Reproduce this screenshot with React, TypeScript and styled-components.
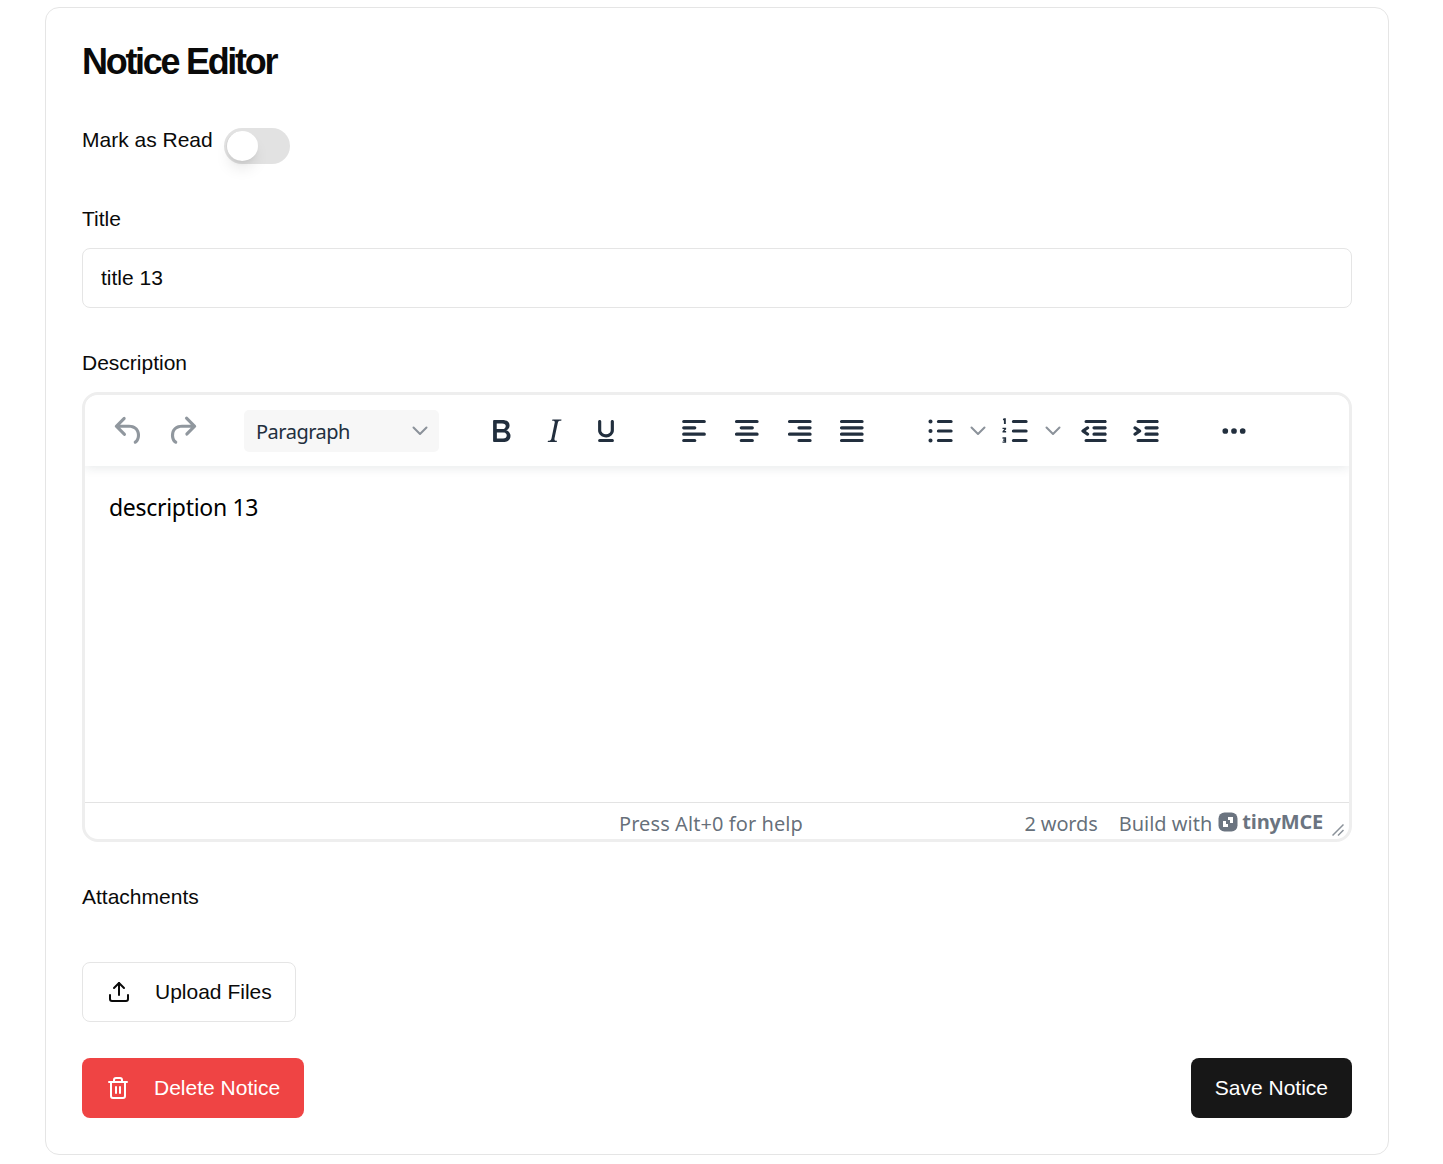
import React from 'react';
import styled, { createGlobalStyle } from 'styled-components';
import { Trash2, Upload } from 'lucide-react';

const bar = (x: number, y: number, w: number) => `M${x + 1} ${y}h${w - 2}a1 1 0 0 1 0 2H${x + 1}a1 1 0 0 1 0-2Z`;
const dot = (cx: number, cy: number, r = 1.5) => `M${cx - r} ${cy}a${r} ${r} 0 1 0 ${r * 2} 0a${r} ${r} 0 1 0 ${-r * 2} 0Z`;

const icons: Record<string, string> = {
	undo: 'M6.4 8H12c3.7 0 6.2 2 6.8 5.1.6 2.7-.4 5.6-2.3 6.8a1 1 0 0 1-1-1.8c1.1-.6 1.8-2.7 1.4-4.6-.5-2.1-2.1-3.5-4.9-3.5H6.4l3.3 3.3a1 1 0 1 1-1.4 1.4l-5-5a1 1 0 0 1 0-1.4l5-5a1 1 0 0 1 1.4 1.4L6.4 8Z',
	redo: 'M17.6 10H12c-2.8 0-4.4 1.4-4.9 3.5-.4 2 .3 4 1.4 4.6a1 1 0 1 1-1 1.8c-2-1.2-2.9-4.1-2.3-6.8.6-3 3-5.1 6.8-5.1h5.6l-3.3-3.3a1 1 0 1 1 1.4-1.4l5 5a1 1 0 0 1 0 1.4l-5 5a1 1 0 0 1-1.4-1.4l3.3-3.3Z',
	bold: 'M7.8 19c-.3 0-.5 0-.6-.2l-.2-.5V5.7c0-.2 0-.4.2-.5l.6-.2h5c1.5 0 2.7.3 3.5 1 .7.6 1.1 1.4 1.1 2.5a3 3 0 0 1-.6 1.9c-.4.6-1 1-1.6 1.2.4.1.9.3 1.3.6s.8.7 1 1.2c.4.4.5 1 .5 1.6 0 1.3-.4 2.3-1.3 3-.8.7-2.1 1-3.8 1H7.8Zm5-8.3c.6 0 1.2-.1 1.6-.5.4-.3.6-.7.6-1.3 0-1.1-.8-1.7-2.3-1.7H9.3v3.5h3.4Zm.5 6c.7 0 1.3-.1 1.7-.4.4-.4.6-.9.6-1.5s-.2-1-.7-1.4c-.4-.3-1-.4-2-.4H9.4v3.8h4Z',
	italic: 'm16.7 4.7-.1.9h-.3c-.6 0-1 0-1.4.3-.3.3-.4.6-.5 1.1l-2.1 9.8v.6c0 .5.4.8 1.4.8h.2l-.2.8H8l.2-.8h.2c1.1 0 1.8-.5 2-1.5l2-9.8.1-.5c0-.6-.4-.8-1.4-.8h-.3l.2-.9h5.8Z',
	underline: 'M16 5c.6 0 1 .4 1 1v5.5a4 4 0 0 1-.4 1.8l-1 1.4a5.3 5.3 0 0 1-5.5 1 5 5 0 0 1-1.6-1c-.5-.4-.8-.9-1.1-1.4a4 4 0 0 1-.4-1.8V6c0-.6.4-1 1-1s1 .4 1 1v5.5c0 .3 0 .6.2 1l.6.7a3.3 3.3 0 0 0 2.2.8 3.4 3.4 0 0 0 2.2-.8c.3-.2.4-.5.6-.8l.2-.9V6c0-.6.4-1 1-1ZM8 17h8c.6 0 1 .4 1 1s-.4 1-1 1H8a1 1 0 0 1 0-2Z',
	alignLeft: bar(4.5, 5, 15) + bar(4.5, 9, 9) + bar(4.5, 13, 15) + bar(4.5, 17, 9),
	alignCenter: bar(5, 5, 15) + bar(8, 9, 9) + bar(5, 13, 15) + bar(8, 17, 9),
	alignRight: bar(5, 5, 15) + bar(11, 9, 9) + bar(5, 13, 15) + bar(11, 17, 9),
	alignJustify: bar(5, 5, 15) + bar(5, 9, 15) + bar(5, 13, 15) + bar(5, 17, 15),
	bullets: bar(10, 5, 10) + bar(10, 11, 10) + bar(10, 17, 10) + dot(6, 6, 1.3) + dot(6, 12, 1.3) + dot(6, 18, 1.3),
	numbers: bar(10, 5, 10) + bar(10, 11, 10) + bar(10, 17, 10)
		+ 'M5 4h1.2v3.6H5V5.1l-.6.2V4.4L5 4Zm-.9 6h2.3v.9L5.3 12h1.1v.9H4.1v-.8l1.2-1.3H4.1V10Zm0 6h2.3v3.4H4.1v-.8h1.2v-.5H4.4v-.7h.9v-.5H4.1V16Z',
	outdent: 'M7 5h12c.6 0 1 .4 1 1s-.4 1-1 1H7a1 1 0 1 1 0-2Zm5 4h7c.6 0 1 .4 1 1s-.4 1-1 1h-7a1 1 0 0 1 0-2Zm0 4h7c.6 0 1 .4 1 1s-.4 1-1 1h-7a1 1 0 0 1 0-2Zm-5 4h12a1 1 0 0 1 0 2H7a1 1 0 0 1 0-2Zm1.6-3.8a1 1 0 0 1-1.2 1.6l-3-2a1 1 0 0 1 0-1.6l3-2a1 1 0 0 1 1.2 1.6L6.8 12l1.8 1.2Z',
	indent: 'M7 5h12c.6 0 1 .4 1 1s-.4 1-1 1H7a1 1 0 1 1 0-2Zm5 4h7c.6 0 1 .4 1 1s-.4 1-1 1h-7a1 1 0 0 1 0-2Zm0 4h7c.6 0 1 .4 1 1s-.4 1-1 1h-7a1 1 0 0 1 0-2Zm-5 4h12a1 1 0 0 1 0 2H7a1 1 0 0 1 0-2Zm-2.6-3.8L6.2 12l-1.8-1.2a1 1 0 0 1 1.2-1.6l3 2a1 1 0 0 1 0 1.6l-3 2a1 1 0 1 1-1.2-1.6Z',
	more: dot(6.5, 12, 1.8) + dot(12, 12, 1.8) + dot(17.5, 12, 1.8),
};

const App: React.FC = () => (
	<Page>
		<GlobalStyle />
		<Card>
			<Heading>{'Notice Editor'}</Heading>
			<ReadRow>
				<Label>{'Mark as Read'}</Label>
				<Toggle><Knob /></Toggle>
			</ReadRow>
			<Field>
				<Label>{'Title'}</Label>
				<TitleInput readOnly value={'title 13'} />
			</Field>
			<EditorField>
				<Label>{'Description'}</Label>
				<Editor>
					<Toolbar>
						<ToolGroup>
							<ToolIcon name={'undo'} muted />
							<ToolIcon name={'redo'} muted />
						</ToolGroup>
						<BlockSelect>
							<SelectValue>{'Paragraph'}</SelectValue>
							<Chevron />
						</BlockSelect>
						<ToolGroup>
							<ToolIcon name={'bold'} />
							<ToolIcon name={'italic'} />
							<ToolIcon name={'underline'} />
						</ToolGroup>
						<AlignGroup>
							<ToolIcon name={'alignLeft'} />
							<ToolIcon name={'alignCenter'} />
							<ToolIcon name={'alignRight'} />
							<ToolIcon name={'alignJustify'} />
						</AlignGroup>
						<ToolGroup>
							<SplitButton $width={75}>
								<Glyph name={'bullets'} />
								<Chevron />
							</SplitButton>
							<SplitButton $width={79}>
								<Glyph name={'numbers'} />
								<Chevron />
							</SplitButton>
							<ToolIcon name={'outdent'} />
							<ToolIcon name={'indent'} />
						</ToolGroup>
						<MoreGroup>
							<ToolIcon name={'more'} />
						</MoreGroup>
					</Toolbar>
					<EditorBody>{'description 13'}</EditorBody>
					<StatusBar>
						<HelpText>{'Press Alt+0 for help'}</HelpText>
						<WordCount>{'2 words'}</WordCount>
						<StatusText>{'Build with'}</StatusText>
						<Brand>
							<BrandMark />
							<BrandName>{'tinyMCE'}</BrandName>
						</Brand>
						<ResizeGrip />
					</StatusBar>
				</Editor>
			</EditorField>
			<Attachments>
				<Label>{'Attachments'}</Label>
				<UploadButton>
					<Upload size={24} strokeWidth={2} />
					{'Upload Files'}
				</UploadButton>
			</Attachments>
			<Actions>
				<DeleteButton>
					<Trash2 size={24} strokeWidth={2} />
					{'Delete Notice'}
				</DeleteButton>
				<SaveButton>{'Save Notice'}</SaveButton>
			</Actions>
		</Card>
	</Page>
);

const Glyph: React.FC<{ name: string; muted?: boolean }> = ({ name, muted }) => (
	<GlyphSvg viewBox={'0 0 24 24'} $muted={muted}>
		<path d={icons[name]} />
	</GlyphSvg>
);

const ToolIcon: React.FC<{ name: string; muted?: boolean }> = props => (
	<ToolButton><Glyph {...props} /></ToolButton>
);

const Chevron: React.FC = () => (
	<ChevronSvg viewBox={'0 0 16 10'}>
		<path d={'M1.5 1.5 8 8l6.5-6.5'} />
	</ChevronSvg>
);

const BrandMark: React.FC = () => (
	<svg width={20} height={20} viewBox={'0 0 20 20'}>
		<rect x={0.5} y={0.5} width={19} height={19} rx={6} fill={'#6b7480'} />
		<path d={'M10 5h5v6h-3V8h-2V5Zm0 10H5V9h3v3h2v3Z'} fill={'#fff'} />
	</svg>
);

const ResizeGrip: React.FC = () => (
	<GripSvg viewBox={'0 0 12 12'}>
		<path d={'M0.5 11.5 11.5 0.5M6 11.5l5.5-5.5'} />
	</GripSvg>
);

const GlobalStyle = createGlobalStyle`
	html, body {
		margin: 0;
		padding: 0;
		background: #fff;
	}

	body {
		font-family: 'Liberation Sans', Arial, sans-serif;
		color: #0a0a0a;
	}
`;

const Page = styled.div`
	box-sizing: border-box;
	height: 1164px;
	padding: 7px 54px 9px 45px;
	overflow: hidden;
`;

const Card = styled.main`
	box-sizing: border-box;
	height: 1148px;
	padding: 34px 36px 36px;
	display: flex;
	flex-direction: column;
	background: #fff;
	border: 1px solid #e5e5e5;
	border-radius: 14px;
`;

const Heading = styled.h1`
	margin: 0 0 46px;
	font-size: 36px;
	line-height: 40px;
	font-weight: 700;
	letter-spacing: -2.3px;
`;

const ReadRow = styled.div`
	display: flex;
	align-items: flex-start;
	gap: 11px;
	height: 36px;
	margin-bottom: 43px;
`;

const Label = styled.label`
	font-size: 21px;
	line-height: 24px;
`;

const Toggle = styled.div`
	box-sizing: border-box;
	width: 66px;
	height: 36px;
	padding: 3px 2px;
	border-radius: 18px;
	background: #e2e2e2;
`;

const Knob = styled.div`
	box-sizing: border-box;
	width: 32px;
	height: 30px;
	border-radius: 50%;
	background: #fff;
	border-left: 1px solid #d4d4d4;
	box-shadow: 0 10px 15px -3px rgba(0, 0, 0, 0.1), 0 4px 6px -4px rgba(0, 0, 0, 0.1);
`;

const Field = styled.div`
	display: flex;
	flex-direction: column;
	gap: 17px;
	margin-bottom: 43px;
`;

const EditorField = styled(Field)`
	margin-bottom: 43px;
`;

const TitleInput = styled.input`
	box-sizing: border-box;
	width: 100%;
	height: 60px;
	padding: 0 18px;
	font: 21px 'Liberation Sans', Arial, sans-serif;
	color: #0a0a0a;
	border: 1px solid #e5e5e5;
	border-radius: 8px;
	outline: none;
`;

const Editor = styled.div`
	box-sizing: border-box;
	height: 450px;
	display: flex;
	flex-direction: column;
	border: 3px solid #eeeeee;
	border-radius: 16px;
	overflow: hidden;
	font-family: 'Noto Sans', 'Open Sans', sans-serif;
`;

const Toolbar = styled.div`
	flex: none;
	height: 71px;
	padding-left: 18px;
	display: flex;
	align-items: center;
	gap: 36px;
	background: #fff;
	box-shadow: 0 2px 10px rgba(34, 47, 62, 0.1);
	position: relative;
`;

const ToolGroup = styled.div`
	display: flex;
	align-items: center;
`;

const AlignGroup = styled(ToolGroup)`
	margin-left: -1px;
`;

const MoreGroup = styled(ToolGroup)`
	margin-left: -1px;
`;

const ToolButton = styled.div`
	width: 52.5px;
	display: flex;
	justify-content: center;
`;

const GlyphSvg = styled.svg<{ $muted?: boolean }>`
	display: block;
	flex: none;
	width: 38px;
	height: 38px;
	fill: ${p => p.$muted ? 'rgba(34, 47, 62, 0.5)' : '#222f3e'};
`;

const BlockSelect = styled.div`
	box-sizing: border-box;
	width: 195px;
	height: 42px;
	padding: 0 11px 0 12px;
	display: flex;
	align-items: center;
	justify-content: space-between;
	background: #f7f7f7;
	border-radius: 5px;
	color: #222f3e;
`;

const SelectValue = styled.span`
	padding-top: 2px;
	font-size: 20px;
	letter-spacing: -0.5px;
`;

const ChevronSvg = styled.svg`
	display: block;
	flex: none;
	width: 16px;
	height: 10px;
	fill: none;
	stroke: #8b929a;
	stroke-width: 2;
	stroke-linecap: round;
	stroke-linejoin: round;
`;

const SplitButton = styled.div<{ $width: number }>`
	box-sizing: border-box;
	width: ${p => p.$width}px;
	padding-left: 7px;
	display: flex;
	align-items: center;
	gap: 11px;
`;

const EditorBody = styled.div`
	flex: 1;
	padding: 25px 24px 0;
	font-size: 23px;
	line-height: 32px;
	letter-spacing: -0.3px;
	color: #000;
`;

const StatusBar = styled.div`
	flex: none;
	box-sizing: border-box;
	height: 37px;
	padding: 7px 5px 0 534px;
	display: flex;
	align-items: flex-start;
	border-top: 1px solid #e3e3e3;
	font-size: 20px;
	line-height: 28px;
	color: rgba(34, 47, 62, 0.7);
`;

const StatusText = styled.span`
	white-space: nowrap;
`;

const HelpText = styled(StatusText)`
	letter-spacing: 0.08px;
`;

const WordCount = styled(StatusText)`
	margin-left: auto;
	margin-right: 21px;
	letter-spacing: -0.15px;
`;

const Brand = styled.div`
	display: flex;
	align-items: center;
	gap: 4px;
	margin: 0 9px 0 6px;
	height: 24px;
`;

const BrandName = styled.span`
	font-family: 'Open Sans', sans-serif;
	font-weight: 700;
	font-size: 20px;
	letter-spacing: -0.2px;
	color: #6b7480;
`;

const GripSvg = styled.svg`
	flex: none;
	width: 12px;
	height: 12px;
	margin-top: 14px;
	fill: none;
	stroke: #8b929a;
	stroke-width: 1.5;
`;

const Attachments = styled.div`
	display: flex;
	flex-direction: column;
	align-items: flex-start;
	gap: 53px;
	margin-bottom: 36px;
`;

const UploadButton = styled.button`
	box-sizing: border-box;
	height: 60px;
	padding: 0 23px 0 24px;
	display: flex;
	align-items: center;
	gap: 24px;
	background: #fff;
	border: 1px solid #e5e5e5;
	border-radius: 8px;
	font: 21px 'Liberation Sans', Arial, sans-serif;
	color: #0a0a0a;
`;

const Actions = styled.div`
	display: flex;
	justify-content: space-between;
`;

const DeleteButton = styled.button`
	box-sizing: border-box;
	height: 60px;
	padding: 0 24px;
	display: flex;
	align-items: center;
	gap: 24px;
	background: #ef4444;
	border: none;
	border-radius: 8px;
	font: 21px 'Liberation Sans', Arial, sans-serif;
	color: #fff;
`;

const SaveButton = styled.button`
	box-sizing: border-box;
	height: 60px;
	padding: 0 24px;
	background: #171717;
	border: none;
	border-radius: 8px;
	font: 21px 'Liberation Sans', Arial, sans-serif;
	color: #fff;
`;

export default App;
